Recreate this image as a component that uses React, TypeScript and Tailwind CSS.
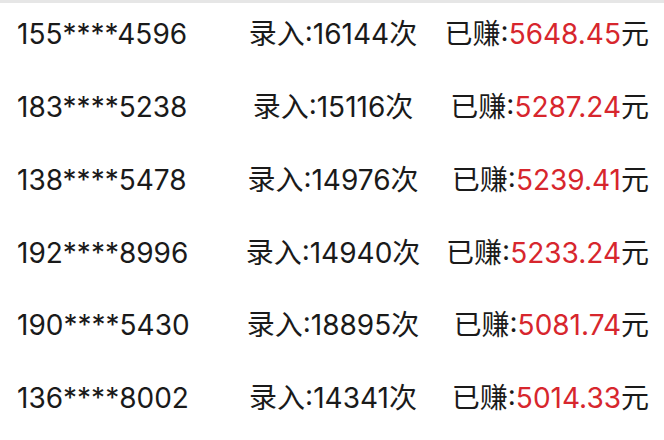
const rows = [
  { phone: '155****4596', count: 16144, earned: '5648.45' },
  { phone: '183****5238', count: 15116, earned: '5287.24' },
  { phone: '138****5478', count: 14976, earned: '5239.41' },
  { phone: '192****8996', count: 14940, earned: '5233.24' },
  { phone: '190****5430', count: 18895, earned: '5081.74' },
  { phone: '136****8002', count: 14341, earned: '5014.33' },
];

export default function App() {
  return (
    <div
      className="w-[664px] h-[440px] overflow-hidden bg-white border-t-[3px] border-[#e6e6e6]"
      style={{ fontFamily: 'Inter, "Noto Sans CJK SC", sans-serif' }}
    >
      <div className="flex flex-col -mt-[5px] pl-[17px] pr-[15px] text-[28px] text-[#1a1a1a] proportional-nums">
        {rows.map((r) => (
          <div key={r.phone} className="grid grid-cols-3 items-center h-[72.75px]">
            <span className="justify-self-start">{r.phone}</span>
            <span className="justify-self-center">录入:{r.count}次</span>
            <span className="justify-self-end">
              已赚:<span className="text-[#d7262d]">{r.earned}</span>元
            </span>
          </div>
        ))}
      </div>
    </div>
  );
}
